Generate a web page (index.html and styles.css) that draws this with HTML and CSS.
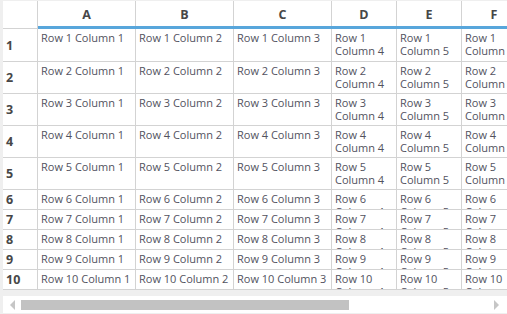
FILE: index.html
```html
<!DOCTYPE html>
<html>
<head>
<meta charset="utf-8">
<link rel="stylesheet" href="styles.css">
</head>
<body>
<div class="frame">
  <div class="viewport">
    <div class="grid">
      <div class="corner"></div>
      <div class="colhead">A</div>
      <div class="colhead">B</div>
      <div class="colhead">C</div>
      <div class="colhead">D</div>
      <div class="colhead">E</div>
      <div class="colhead">F</div>
      <div class="bar"></div>

      <div class="rowhead">1</div>
      <div class="cell">Row 1 Column 1</div><div class="cell">Row 1 Column 2</div><div class="cell">Row 1 Column 3</div><div class="cell">Row 1 Column 4</div><div class="cell">Row 1 Column 5</div><div class="cell">Row 1 Column 6</div>
      <div class="rowhead">2</div>
      <div class="cell">Row 2 Column 1</div><div class="cell">Row 2 Column 2</div><div class="cell">Row 2 Column 3</div><div class="cell">Row 2 Column 4</div><div class="cell">Row 2 Column 5</div><div class="cell">Row 2 Column 6</div>
      <div class="rowhead">3</div>
      <div class="cell">Row 3 Column 1</div><div class="cell">Row 3 Column 2</div><div class="cell">Row 3 Column 3</div><div class="cell">Row 3 Column 4</div><div class="cell">Row 3 Column 5</div><div class="cell">Row 3 Column 6</div>
      <div class="rowhead">4</div>
      <div class="cell">Row 4 Column 1</div><div class="cell">Row 4 Column 2</div><div class="cell">Row 4 Column 3</div><div class="cell">Row 4 Column 4</div><div class="cell">Row 4 Column 5</div><div class="cell">Row 4 Column 6</div>
      <div class="rowhead">5</div>
      <div class="cell">Row 5 Column 1</div><div class="cell">Row 5 Column 2</div><div class="cell">Row 5 Column 3</div><div class="cell">Row 5 Column 4</div><div class="cell">Row 5 Column 5</div><div class="cell">Row 5 Column 6</div>
      <div class="rowhead">6</div>
      <div class="cell">Row 6 Column 1</div><div class="cell">Row 6 Column 2</div><div class="cell">Row 6 Column 3</div><div class="cell">Row 6 Column 4</div><div class="cell">Row 6 Column 5</div><div class="cell">Row 6 Column 6</div>
      <div class="rowhead">7</div>
      <div class="cell">Row 7 Column 1</div><div class="cell">Row 7 Column 2</div><div class="cell">Row 7 Column 3</div><div class="cell">Row 7 Column 4</div><div class="cell">Row 7 Column 5</div><div class="cell">Row 7 Column 6</div>
      <div class="rowhead">8</div>
      <div class="cell">Row 8 Column 1</div><div class="cell">Row 8 Column 2</div><div class="cell">Row 8 Column 3</div><div class="cell">Row 8 Column 4</div><div class="cell">Row 8 Column 5</div><div class="cell">Row 8 Column 6</div>
      <div class="rowhead">9</div>
      <div class="cell">Row 9 Column 1</div><div class="cell">Row 9 Column 2</div><div class="cell">Row 9 Column 3</div><div class="cell">Row 9 Column 4</div><div class="cell">Row 9 Column 5</div><div class="cell">Row 9 Column 6</div>
      <div class="rowhead">10</div>
      <div class="cell">Row 10 Column 1</div><div class="cell">Row 10 Column 2</div><div class="cell">Row 10 Column 3</div><div class="cell">Row 10 Column 4</div><div class="cell">Row 10 Column 5</div><div class="cell">Row 10 Column 6</div>
    </div>
  </div>
  <div class="scrollbar">
    <svg class="arrow" width="6" height="10" viewBox="0 0 6 10"><polygon points="5,0 5,10 0,5" fill="#c6c6c6"/></svg>
    <div class="track"><div class="thumb"></div></div>
    <svg class="arrow" width="6" height="10" viewBox="0 0 6 10"><polygon points="0,0 0,10 5,5" fill="#c6c6c6"/></svg>
  </div>
</div>
</body>
</html>
```

FILE: styles.css
```css
html, body {
  margin: 0;
  padding: 0;
  background: #efefef;
}
body {
  width: 507px;
  height: 314px;
  overflow: hidden;
  font-family: "Open Sans", "Noto Sans", sans-serif;
}
.frame {
  padding: 1px 0 0 3px;
  display: flex;
  flex-direction: column;
}
.viewport {
  overflow: hidden;
  width: 504px;
}
.grid {
  display: grid;
  grid-template-columns: 35px 98px 98px 98px 65px 65px 65px;
  grid-template-rows: 25px 3px 33px 32px 32px 32px 32px 20px 20px 20px 20px 20px;
  width: max-content;
  background: #fff;
}
.corner {
  grid-row: 1 / 3;
  border-right: 1px solid #d3d3d3;
  border-bottom: 1px solid #d3d3d3;
  box-sizing: border-box;
}
.colhead {
  border-right: 1px solid #d3d3d3;
  box-sizing: border-box;
  display: flex;
  align-items: center;
  justify-content: center;
  font-weight: 700;
  font-size: 12.5px;
  color: #474747;
  padding-top: 1px;
}
.bar {
  grid-column: 2 / -1;
  background: #58a6db;
}
.rowhead {
  border-right: 1px solid #d3d3d3;
  border-bottom: 1px solid #d3d3d3;
  box-sizing: border-box;
  display: flex;
  align-items: center;
  padding-left: 3px;
  font-weight: 700;
  font-size: 12.5px;
  color: #474747;
}
.cell {
  border-right: 1px solid #d3d3d3;
  border-bottom: 1px solid #d3d3d3;
  box-sizing: border-box;
  padding: 2px 3px 0 3px;
  font-size: 11px;
  line-height: 13px;
  color: #52525e;
  overflow: hidden;
}
.scrollbar {
  margin-top: 6px;
  height: 17px;
  background: #fff;
  display: flex;
  align-items: center;
  padding: 0 7px;
  gap: 5px;
}
.arrow {
  flex: none;
}
.track {
  flex: 1;
  height: 10px;
  display: flex;
}
.thumb {
  width: 328px;
  height: 10px;
  background: #c2c2c2;
}
```
